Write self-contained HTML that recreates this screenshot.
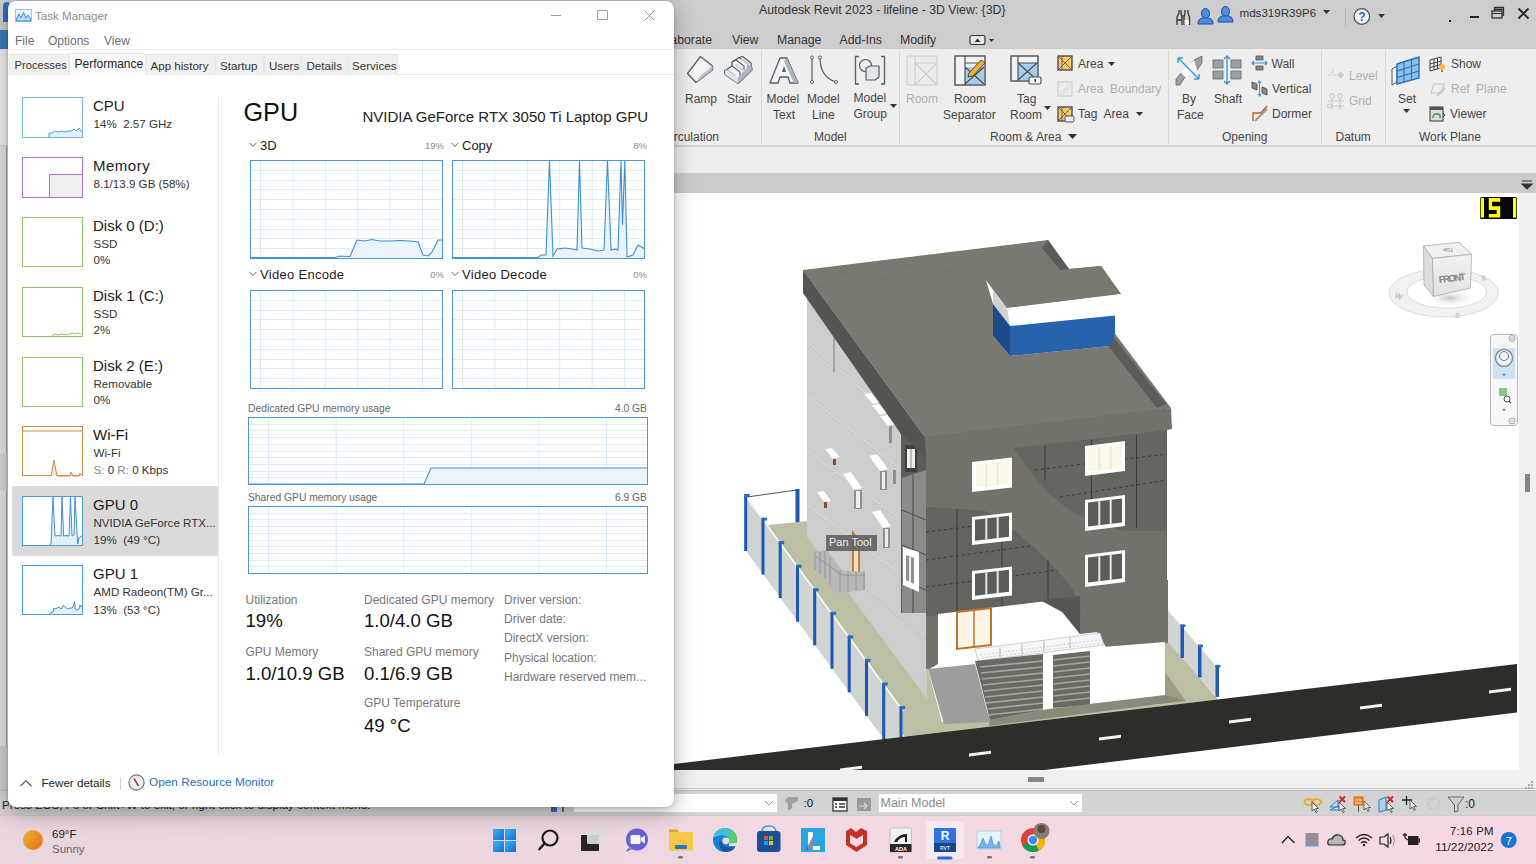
<!DOCTYPE html>
<html><head><meta charset="utf-8">
<style>
*{margin:0;padding:0;box-sizing:border-box}
html,body{width:1536px;height:864px;overflow:hidden;background:#fff;font-family:"Liberation Sans",sans-serif;position:relative}
.a{position:absolute}
.t{position:absolute;line-height:1;white-space:nowrap}
svg{position:absolute;overflow:visible}
</style></head><body>

<!-- ===== REVIT BACKGROUND ===== -->
<div class="a" style="left:0;top:0;width:1536px;height:49px;background:#cdcdcd"></div>
<div class="a" style="left:0;top:49px;width:1536px;height:97px;background:#eeeeee"></div>
<div class="a" style="left:0;top:146px;width:1536px;height:1px;background:#d6d6d6"></div>
<div class="a" style="left:0;top:147px;width:1536px;height:26px;background:#eeeeee"></div>
<div class="a" style="left:0;top:173px;width:1536px;height:21px;background:#cbcbcb"></div>
<!-- view area -->
<div class="a" id="view" style="left:0;top:193px;width:1519px;height:577px;background:#fff"></div>
<div class="a" style="left:1519px;top:193px;width:17px;height:597px;background:#f0f0f0"></div>
<div class="a" style="left:1525px;top:474px;width:5px;height:18px;background:#858585"></div>
<div class="a" style="left:0;top:770px;width:1519px;height:20px;background:#f0f0f0"></div>
<div class="a" style="left:1028px;top:777px;width:16px;height:5px;background:#858585"></div>
<!-- status bar -->
<div class="a" style="left:0;top:790px;width:1536px;height:26px;background:#d3d3d3"></div>
<div class="a" style="left:0;top:790px;width:1536px;height:1px;background:#bdbdbd"></div>


<!-- ===== REVIT CHROME ===== -->
<div class="t" style="left:759px;top:3.5px;font-size:12.3px;color:#333">Autodesk Revit 2023 - lifeline - 3D View: {3D}</div>
<div class="t" style="right:824px;top:33.5px;font-size:12.3px;color:#333">Collaborate</div>
<div class="t" style="left:732px;top:33.5px;font-size:12.3px;color:#333">View</div>
<div class="t" style="left:777px;top:33.5px;font-size:12.3px;color:#333">Manage</div>
<div class="t" style="left:839.5px;top:33.5px;font-size:12.3px;color:#333">Add-Ins</div>
<div class="t" style="left:900px;top:33.5px;font-size:12.3px;color:#333">Modify</div>
<svg style="left:969px;top:34px" width="28" height="12" viewBox="0 0 28 12"><rect x="1" y="1.5" width="15" height="9" rx="2" fill="#e8e8e8" stroke="#333" stroke-width="1.2"/><path d="M5.5 8 L8.5 4.5 L11.5 8Z" fill="#333"/><path d="M20 5 L25 5 L22.5 8Z" fill="#333"/></svg>
<!-- right title icons -->
<svg style="left:1176px;top:9px" width="15" height="17" viewBox="0 0 15 17"><path d="M1 16 L1 8 L3 4 L3 1 M6 16 L6 8 L5 4 L5 1 M1 11 L6 11" fill="none" stroke="#333" stroke-width="1.3"/><path d="M8 16 L8 8 L9 4 L9 1 M13.5 16 L13.5 8 L12 4 L12 1" fill="none" stroke="#333" stroke-width="1.3"/><rect x="8.6" y="11" width="4.3" height="4.5" fill="#f4f4f4"/><path d="M6 7 L8 7" stroke="#333" stroke-width="1.2"/></svg>
<svg style="left:1197px;top:7px" width="17" height="18" viewBox="0 0 17 18"><ellipse cx="8.5" cy="6.5" rx="4" ry="5" fill="#4d8de0" stroke="#1d4f9a" stroke-width="1"/><path d="M1 17 Q1 10 8.5 11 Q16 10 16 17Z" fill="#4d8de0" stroke="#1d4f9a" stroke-width="1"/></svg>
<svg style="left:1217px;top:5px" width="17" height="18" viewBox="0 0 17 18"><ellipse cx="8.5" cy="6.5" rx="4" ry="5" fill="#4d8de0" stroke="#1d4f9a" stroke-width="1"/><path d="M1 17 Q1 10 8.5 11 Q16 10 16 17Z" fill="#4d8de0" stroke="#1d4f9a" stroke-width="1"/></svg>
<div class="t" style="left:1239.5px;top:7px;font-size:11.6px;color:#333">mds319R39P6</div>
<svg style="left:1323px;top:10px" width="7" height="5" viewBox="0 0 7 5"><path d="M0 0 L7 0 L3.5 4Z" fill="#333"/></svg>
<div class="a" style="left:1345px;top:8px;width:1px;height:18px;background:#b8b8b8"></div>
<svg style="left:1353px;top:8px" width="19" height="18" viewBox="0 0 19 18"><circle cx="8.8" cy="8.5" r="7.8" fill="#eef2f8" stroke="#555" stroke-width="1.3"/><text x="8.8" y="13" font-family="Liberation Sans" font-weight="bold" font-size="12" text-anchor="middle" fill="#2a62c0">?</text></svg>
<svg style="left:1378px;top:14px" width="7" height="5" viewBox="0 0 7 5"><path d="M0 0 L7 0 L3.5 4Z" fill="#333"/></svg>
<div class="a" style="left:1449px;top:20px;width:2px;height:2px;background:#222"></div>
<div class="a" style="left:1470px;top:16px;width:9px;height:2px;background:#222"></div>
<svg style="left:1491px;top:6px" width="14" height="13" viewBox="0 0 14 13"><rect x="1" y="5" width="10" height="7" fill="none" stroke="#333" stroke-width="1.3"/><path d="M1 7.5 L11 7.5" stroke="#333" stroke-width="1"/><path d="M3.5 5 L3.5 1.5 L12.5 1.5 L12.5 9 L11 9 M3.5 3.5 L12.5 3.5" fill="none" stroke="#333" stroke-width="1.3"/></svg>
<svg style="left:1517px;top:7px" width="13" height="13" viewBox="0 0 13 13"><path d="M1.5 1.5 L11.5 11.5 M11.5 1.5 L1.5 11.5" stroke="#222" stroke-width="1.8"/></svg>

<!-- ribbon separators -->
<div class="a" style="left:761px;top:50px;width:1px;height:95px;background:#d8d8d8"></div>
<div class="a" style="left:899px;top:50px;width:1px;height:95px;background:#d8d8d8"></div>
<div class="a" style="left:1168px;top:50px;width:1px;height:95px;background:#d8d8d8"></div>
<div class="a" style="left:1321px;top:50px;width:1px;height:95px;background:#d8d8d8"></div>
<div class="a" style="left:1385px;top:50px;width:1px;height:95px;background:#d8d8d8"></div>
<div class="a" style="left:0;top:145px;width:1536px;height:1px;background:#d4d4d4"></div>

<!-- ribbon labels -->
<div class="t" style="left:685px;top:92.5px;font-size:12px;color:#454545">Ramp</div>
<div class="t" style="left:727px;top:92.5px;font-size:12px;color:#454545">Stair</div>
<div class="t" style="left:766.5px;top:92.5px;font-size:12px;color:#454545">Model</div>
<div class="t" style="left:773px;top:108.5px;font-size:12px;color:#454545">Text</div>
<div class="t" style="left:807px;top:92.5px;font-size:12px;color:#454545">Model</div>
<div class="t" style="left:812px;top:108.5px;font-size:12px;color:#454545">Line</div>
<div class="t" style="left:853.5px;top:92px;font-size:12px;color:#454545">Model</div>
<div class="t" style="left:853.5px;top:108px;font-size:12px;color:#454545">Group</div>
<svg style="left:890px;top:104px" width="7" height="4" viewBox="0 0 7 4"><path d="M0 0 L7 0 L3.5 4Z" fill="#333"/></svg>
<div class="t" style="right:817px;top:130.5px;font-size:12px;color:#454545">Circulation</div>
<div class="t" style="left:814px;top:130.5px;font-size:12px;color:#454545">Model</div>
<div class="t" style="left:906px;top:92.5px;font-size:12px;color:#b0b0b0">Room</div>
<div class="t" style="left:954px;top:92.5px;font-size:12px;color:#454545">Room</div>
<div class="t" style="left:943px;top:108.5px;font-size:12px;color:#454545">Separator</div>
<div class="t" style="left:1017px;top:93px;font-size:12px;color:#454545">Tag</div>
<div class="t" style="left:1010px;top:109px;font-size:12px;color:#454545">Room</div>
<svg style="left:1044px;top:106px" width="7" height="4" viewBox="0 0 7 4"><path d="M0 0 L7 0 L3.5 4Z" fill="#333"/></svg>
<div class="t" style="left:1078px;top:57.5px;font-size:12px;color:#454545">Area</div>
<svg style="left:1108px;top:62px" width="7" height="4" viewBox="0 0 7 4"><path d="M0 0 L7 0 L3.5 4Z" fill="#333"/></svg>
<div class="t" style="left:1078px;top:82.5px;font-size:12px;color:#b0b0b0">Area</div><div class="t" style="left:1110px;top:82.5px;font-size:12px;color:#b0b0b0">Boundary</div>
<div class="t" style="left:1078px;top:107.5px;font-size:12px;color:#454545">Tag</div><div class="t" style="left:1103.5px;top:107.5px;font-size:12px;color:#454545">Area</div>
<svg style="left:1136px;top:112px" width="7" height="4" viewBox="0 0 7 4"><path d="M0 0 L7 0 L3.5 4Z" fill="#333"/></svg>
<div class="t" style="left:990px;top:130.5px;font-size:12px;color:#454545">Room &amp; Area</div>
<svg style="left:1068px;top:134px" width="9" height="5" viewBox="0 0 9 5"><path d="M0 0 L9 0 L4.5 5Z" fill="#333"/></svg>
<div class="t" style="left:1182px;top:92.5px;font-size:12px;color:#454545">By</div>
<div class="t" style="left:1177px;top:108.5px;font-size:12px;color:#454545">Face</div>
<div class="t" style="left:1214px;top:92.5px;font-size:12px;color:#454545">Shaft</div>
<div class="t" style="left:1271.5px;top:57.5px;font-size:12px;color:#454545">Wall</div>
<div class="t" style="left:1272px;top:82.5px;font-size:12px;color:#454545">Vertical</div>
<div class="t" style="left:1272px;top:107.5px;font-size:12px;color:#454545">Dormer</div>
<div class="t" style="left:1222px;top:130.5px;font-size:12px;color:#454545">Opening</div>
<div class="t" style="left:1349px;top:70px;font-size:12px;color:#b0b0b0">Level</div>
<div class="t" style="left:1349px;top:95px;font-size:12px;color:#b0b0b0">Grid</div>
<div class="t" style="left:1335.5px;top:130.5px;font-size:12px;color:#454545">Datum</div>
<div class="t" style="left:1398px;top:92.5px;font-size:12px;color:#454545">Set</div>
<svg style="left:1403px;top:109px" width="7" height="4" viewBox="0 0 7 4"><path d="M0 0 L7 0 L3.5 4Z" fill="#333"/></svg>
<div class="t" style="left:1451px;top:57.5px;font-size:12px;color:#454545">Show</div>
<div class="t" style="left:1451px;top:82.5px;font-size:12px;color:#b0b0b0">Ref</div><div class="t" style="left:1476px;top:82.5px;font-size:12px;color:#b0b0b0">Plane</div>
<div class="t" style="left:1450px;top:107.5px;font-size:12px;color:#454545">Viewer</div>
<div class="t" style="left:1419px;top:130.5px;font-size:12px;color:#454545">Work Plane</div>
<svg style="left:1522px;top:181px" width="10" height="8" viewBox="0 0 10 8"><path d="M0 0 L10 0 M0 3 L10 3 L5 8Z" fill="#333" stroke="#333" stroke-width="1.2"/></svg>

<!-- Ramp -->
<svg style="left:686px;top:55px" width="30" height="30" viewBox="0 0 30 30"><path d="M1.5 18.5 L14.5 1.5 L26.5 11 L26.5 15 L10 27.5 Z" fill="#f4f4f4" stroke="#5a6270" stroke-width="1.4" stroke-linejoin="round"/><path d="M10 27.5 L26.5 15 L26.5 11 L14 21Z" fill="#b8c0cc"/></svg>
<!-- Stair -->
<svg style="left:723px;top:55px" width="32" height="31" viewBox="0 0 32 31"><path d="M1.5 16 L9 11 L9 7 L16 2.5 L19.5 1.5 L28 8 L29 15 L15 28.5 L2 19.5 Z" fill="#f3f4f6" stroke="#555c66" stroke-width="1.3" stroke-linejoin="round"/><path d="M9 11 L17 17 L17 21 M9 7 L13 5 L21 11 L21 15 M16 2.5 L25 9 L25 13" fill="none" stroke="#555c66" stroke-width="1.1"/><path d="M4.5 15 L12.5 21 M12.5 9.5 L20.5 15.5 M18 4 L26 10" stroke="#c9ced6" stroke-width="2"/><path d="M15 28.5 L29 15 L28 9 L15 22Z" fill="#aeb6c2"/><path d="M2 19.5 L15 28.5 L15 23 L2 15Z" fill="#dfe3e8"/></svg>
<!-- Model Text -->
<svg style="left:769px;top:56px" width="31" height="29" viewBox="0 0 31 29"><path d="M1 27 L11 2 L18 2 L29 27 L21 27 L19 21 L11 21 L9 27Z" fill="#f3f4f6" stroke="#555c66" stroke-width="1.3" stroke-linejoin="round"/><path d="M13 16 L15 10 L17 16Z" fill="#555c66"/><path d="M18 2 L29 27 L25 27 L15 5Z" fill="#aab2be"/></svg>
<!-- Model Line -->
<svg style="left:809px;top:55px" width="30" height="30" viewBox="0 0 30 30"><line x1="3" y1="2" x2="3" y2="27" stroke="#555c66" stroke-width="1.2"/><circle cx="3" cy="2.5" r="1.5" fill="#fff" stroke="#555c66"/><circle cx="3" cy="27" r="1.5" fill="#fff" stroke="#555c66"/><path d="M11 2.5 Q11 22 27 27" fill="none" stroke="#555c66" stroke-width="1.2"/><circle cx="11" cy="2.5" r="1.5" fill="#fff" stroke="#555c66"/><circle cx="27" cy="27" r="1.5" fill="#fff" stroke="#555c66"/></svg>
<!-- Model Group -->
<svg style="left:854px;top:55px" width="32" height="31" viewBox="0 0 32 31"><path d="M5 1.5 L1.5 1.5 L1.5 29 L5 29 M27 1.5 L30.5 1.5 L30.5 29 L27 29" fill="none" stroke="#555c66" stroke-width="1.3"/><circle cx="11.5" cy="10.5" r="6" fill="#eef0f3" stroke="#555c66" stroke-width="1.2"/><path d="M12 13 L16 11 L25 11 L25 22 L21 25 L12 25Z" fill="#e3e6ea" stroke="#555c66" stroke-width="1.2" stroke-linejoin="round"/></svg>
<!-- Room gray -->
<svg style="left:906px;top:55px" width="32" height="31" viewBox="0 0 32 31"><rect x="1" y="1" width="30" height="29" fill="#ececec" stroke="#d2d2d2" stroke-width="1.2"/><path d="M9 1 L9 30 M9 8 L31 8 M9 8 L31 30 M31 8 L9 30" stroke="#cfcfcf" stroke-width="1.2" fill="none"/></svg>
<!-- Room Separator -->
<svg style="left:954px;top:55px" width="32" height="31" viewBox="0 0 32 31"><rect x="1" y="1" width="30" height="29" fill="#f2f3f5" stroke="#4a4f57" stroke-width="1.4"/><rect x="11" y="12" width="19" height="17" fill="#a8cdea"/><path d="M11 1 L11 30 M11 8 L31 8 M11 12 L30 29 M30 12 L11 29" stroke="#4a4f57" stroke-width="1.2" fill="none"/><path d="M15 18 L27 5 L31 8 L19 21 L14 22Z" fill="#f0b030" stroke="#5a4a2a" stroke-width="1"/></svg>
<!-- Tag Room -->
<svg style="left:1010px;top:55px" width="32" height="31" viewBox="0 0 32 31"><rect x="1" y="1" width="27" height="25" fill="#f2f3f5" stroke="#4a4f57" stroke-width="1.4"/><rect x="8" y="8" width="19" height="17" fill="#a8cdea"/><path d="M8 1 L8 26 M8 8 L28 8 M8 8 L27 25 M27 8 L8 25" stroke="#4a4f57" stroke-width="1.2" fill="none"/><rect x="19" y="22" width="12" height="7" rx="1.5" fill="#fff" stroke="#4a4f57" stroke-width="1.2"/><rect x="24.5" y="24" width="1.5" height="3" fill="#333"/></svg>
<!-- Area small -->
<svg style="left:1057px;top:55px" width="16" height="16" viewBox="0 0 16 16"><rect x="1" y="1" width="14" height="14" fill="#f5c96a" stroke="#4a4f57" stroke-width="1.4"/><path d="M1 1 L15 15 M15 1 L1 15 M5 1 L5 15" stroke="#6a5a3a" stroke-width="0.9"/></svg>
<svg style="left:1057px;top:81px" width="16" height="16" viewBox="0 0 16 16"><rect x="1" y="1" width="14" height="14" fill="#ececec" stroke="#cfcfcf" stroke-width="1.2"/><path d="M3 13 L13 3 M6 13 L13 6" stroke="#cfcfcf" stroke-width="1"/></svg>
<svg style="left:1057px;top:106px" width="18" height="17" viewBox="0 0 18 17"><rect x="1" y="1" width="14" height="14" fill="#f5c96a" stroke="#4a4f57" stroke-width="1.4"/><path d="M1 1 L15 15 M15 1 L1 15 M5 1 L5 15" stroke="#6a5a3a" stroke-width="0.9"/><rect x="8" y="10" width="9" height="6" rx="1.5" fill="#e8eef6" stroke="#4a4f57" stroke-width="1"/></svg>
<!-- By Face -->
<svg style="left:1175px;top:55px" width="30" height="31" viewBox="0 0 30 31"><path d="M1 24 L6 18 L10 22 L5 30 L1 30Z M14 11 L19 5 L27 1 L27 8 L22 15Z" fill="#9aa0a8" stroke="#666" stroke-width="0.8"/><path d="M6 18 L19 5 L22 15 L10 22Z" fill="#fff"/><path d="M3 3 L24 24 M3 3 L3 8 M3 3 L8 3 M24 24 L19 24 M24 24 L24 19" stroke="#3a98e0" stroke-width="1.4" fill="none"/></svg>
<!-- Shaft -->
<svg style="left:1212px;top:55px" width="30" height="31" viewBox="0 0 30 31"><rect x="1" y="5" width="10" height="8" fill="#9aa0a8" stroke="#666" stroke-width="0.8"/><rect x="19" y="5" width="10" height="8" fill="#9aa0a8" stroke="#666" stroke-width="0.8"/><rect x="1" y="16" width="10" height="8" fill="#9aa0a8" stroke="#666" stroke-width="0.8"/><rect x="19" y="16" width="10" height="8" fill="#9aa0a8" stroke="#666" stroke-width="0.8"/><path d="M15 1 L15 29 M12 4 L15 1 L18 4 M12 26 L15 29 L18 26" stroke="#3a98e0" stroke-width="1.4" fill="none"/></svg>
<!-- Wall/Vertical/Dormer -->
<svg style="left:1251px;top:55px" width="17" height="17" viewBox="0 0 17 17"><rect x="5" y="1" width="7" height="4" fill="#888" stroke="#555" stroke-width="0.8"/><rect x="5" y="11" width="7" height="4" fill="#888" stroke="#555" stroke-width="0.8"/><path d="M1 8 L16 8 M3 6 L1 8 L3 10 M14 6 L16 8 L14 10" stroke="#3a98e0" stroke-width="1.2" fill="none"/></svg>
<svg style="left:1251px;top:80px" width="17" height="17" viewBox="0 0 17 17"><path d="M1 2 L6 4 L6 10 L1 8Z M11 7 L16 9 L16 15 L11 13Z" fill="#888" stroke="#444" stroke-width="0.8"/><path d="M8.5 1 L8.5 16 M7 3 L8.5 1 L10 3 M7 14 L8.5 16 L10 14" stroke="#3a98e0" stroke-width="1.1" fill="none"/></svg>
<svg style="left:1251px;top:105px" width="17" height="17" viewBox="0 0 17 17"><path d="M2 16 L2 8 L10 8 L16 1" stroke="#c85a2a" stroke-width="1.4" fill="none"/><path d="M4 16 L16 4" stroke="#999" stroke-width="2"/></svg>
<!-- Level Grid gray -->
<svg style="left:1327px;top:68px" width="18" height="14" viewBox="0 0 18 14"><path d="M1 7 L10 7" stroke="#c8c8c8" stroke-width="1" stroke-dasharray="2 1"/><path d="M10 7 L13.5 3.5 L17 7 L13.5 10.5Z" fill="#c8c8c8"/><text x="4" y="5" font-size="6" fill="#c8c8c8" font-family="Liberation Sans">1</text></svg>
<svg style="left:1327px;top:93px" width="18" height="17" viewBox="0 0 18 17"><path d="M5 4 L5 16 M13 4 L13 16 M1 8 L17 8 M1 13 L17 13" stroke="#c8c8c8" stroke-width="1.1"/><circle cx="5" cy="3" r="2.3" fill="#eee" stroke="#c8c8c8"/><circle cx="13" cy="3" r="2.3" fill="#eee" stroke="#c8c8c8"/><circle cx="2.5" cy="13" r="2" fill="#eee" stroke="#c8c8c8"/></svg>
<!-- Set -->
<svg style="left:1391px;top:56px" width="30" height="30" viewBox="0 0 30 30"><path d="M1 13 L6 10 L6 26 L1 29Z" fill="#f3f3f3" stroke="#555" stroke-width="1"/><path d="M6 8 L28 1 L28 22 L6 28Z" fill="#8fc0ea" stroke="#2a6fb8" stroke-width="1.4"/><path d="M13 6 L13 26 M20.5 4 L20.5 24 M6 15 L28 8 M6 21.5 L28 15" stroke="#2a6fb8" stroke-width="1.1"/></svg>
<!-- Show / RefPlane / Viewer -->
<svg style="left:1429px;top:56px" width="17" height="17" viewBox="0 0 17 17"><path d="M1 4 L12 1 L12 12 L1 15Z M1 8 L12 5 M1 11.5 L12 8.5 M5 3 L5 14 M8.5 2 L8.5 13" fill="none" stroke="#444" stroke-width="1"/><circle cx="13" cy="11" r="3" fill="#f7c23a"/><rect x="12" y="14" width="2" height="2" fill="#888"/></svg>
<svg style="left:1429px;top:81px" width="17" height="17" viewBox="0 0 17 17"><path d="M2 12 L5 3 L15 3 L12 12Z" fill="none" stroke="#c8c8c8" stroke-width="1.1"/><path d="M8 15 L16 7" stroke="#c8c8c8" stroke-width="2"/></svg>
<svg style="left:1429px;top:106px" width="17" height="16" viewBox="0 0 17 16"><rect x="1" y="1" width="13" height="14" fill="#ddd" stroke="#444" stroke-width="1.1"/><rect x="1" y="1" width="13" height="3" fill="#555"/><path d="M4 12 Q4 7 9 8 Q12 9 11 12" fill="none" stroke="#3aa040" stroke-width="1.6"/><path d="M14 7 L16 9 L14 11" stroke="#444" stroke-width="1" fill="none"/></svg>



<!-- ===== 3D VIEW ===== -->
<svg style="left:0;top:0" width="1536" height="864" viewBox="0 0 1536 864">
<defs><clipPath id="vc"><rect x="0" y="194" width="1519" height="576"/></clipPath></defs>
<g clip-path="url(#vc)">
<!-- back fence -->
<line x1="747" y1="497" x2="797" y2="490" stroke="#555" stroke-width="1"/>
<rect x="795.5" y="489" width="4" height="36" fill="#1e5bb5"/>
<!-- paving -->
<polygon points="768,525 808,521 1165,600 1168,640 1218,699.4 905,736.6 890,720" fill="#bdbfa5"/>
<polygon points="1165,672 1186,701 1160,704" fill="#9d9d86"/>
<polygon points="1166,608 1218,668 1218,698 1166,640" fill="#d0d4d3"/><line x1="1166" y1="608" x2="1218" y2="668" stroke="#f2f2f2" stroke-width="1"/><rect x="1180.5" y="624.5" width="3.5" height="33.4" fill="#1e5bb5"/><rect x="1180.5" y="624.5" width="5" height="2.5" fill="#2a6ac4"/><rect x="1198.0" y="644.7" width="3.5" height="32.7" fill="#1e5bb5"/><rect x="1198.0" y="644.7" width="5" height="2.5" fill="#2a6ac4"/><rect x="1215.5" y="664.9" width="3.5" height="32.0" fill="#1e5bb5"/><rect x="1215.5" y="664.9" width="5" height="2.5" fill="#2a6ac4"/>
<!-- left wall -->
<polygon points="807,293 901,434 926,460 927,699 807,537" fill="#cbcecd"/>
<g stroke="#f6f6f6" stroke-width="0.9" stroke-dasharray="2 2" fill="none">
<path d="M807 342 L901 425"/><path d="M807 396 L901 470"/><path d="M807 451 L901 520"/><path d="M807 505 L901 575"/>
</g>
<g stroke="#9a9d9c" stroke-width="0.6" stroke-dasharray="1.5 2.5" fill="none">
<path d="M807 343 L901 426"/><path d="M807 397 L901 471"/><path d="M807 452 L901 521"/><path d="M807 506 L901 576"/><path d="M830 560 L926 640"/>
</g>
<line x1="834" y1="338" x2="834" y2="372" stroke="#8a8d8c" stroke-width="1.2"/>
<g fill="#ffffff">
<polygon points="864,394 871,393 880,402 873,404"/><polygon points="872,405 879,404 887,413 880,415"/><polygon points="880,416 887,415 895,424 888,426"/>
<polygon points="825,449 832,448 840,457 833,459"/><polygon points="843,474 851,472 862,488 854,490"/><polygon points="869,456 877,454 888,469 880,471"/>
<polygon points="817,492 824,491 831,501 824,502"/><polygon points="872,512 880,510 891,526 883,528"/>
</g>
<g fill="#8d908f"><rect x="889" y="426" width="3" height="17"/><rect x="854" y="490" width="8" height="19"/><rect x="880" y="471" width="7" height="19"/><rect x="883" y="528" width="7" height="20"/><rect x="893" y="470" width="3" height="14"/></g>
<g fill="#eee"><rect x="856" y="491" width="4" height="17"/><rect x="882" y="472" width="3" height="17"/><rect x="885" y="529" width="3" height="18"/></g>
<rect x="833" y="459" width="3" height="6" fill="#8a4a2a"/><rect x="824" y="502" width="3" height="6" fill="#8a4a2a"/>
<!-- door + small stair -->
<polygon points="852,530 860,540 860,582 852,574" fill="#c97a3f"/><polygon points="854,536 858,541 858,578 854,573" fill="#f1e0c8"/>
<polygon points="815,552 827,550 842,571 865,572 865,590 835,594 813,568" fill="#b8b9b8"/>
<g stroke="#8a8b8a" stroke-width="0.8"><path fill="none" d="M815 552 L815 570 M820 552 L820 574 M825 551 L825 578 M830 558 L830 585 M840 570 L840 592 M848 571 L848 592 M856 571 L856 591 M864 571 L864 590 M815 556 L842 575 L865 575"/></g>
<!-- corner glass column -->
<polygon points="869,380 901,430 926,437 926,613 901,613 901,434" fill="#5c5d59"/>
<polygon points="902,478 926,470 926,613 902,613" fill="#8a8c8a"/>
<g stroke="#3a3b38" stroke-width="0.8"><path d="M913 475 L913 613 M902 510 L926 520 M902 545 L926 555 M902 580 L926 590"/></g>
<rect x="905" y="445" width="12" height="27" fill="#3f403d"/><rect x="907" y="449" width="8" height="19" fill="#f0f0ea"/><rect x="910.5" y="449" width="1" height="19" fill="#888"/>
<polygon points="903,547 919,552 919,592 903,585" fill="#ffffff"/><polygon points="906,555 914,558 914,584 906,580" fill="#8f918f"/><rect x="909" y="557" width="2" height="25" fill="#eee"/>
<!-- front facade -->
<polygon points="926,428 1167,404 1167,643 926,669" fill="#72716a"/>
<!-- dark glass areas -->
<path d="M1013 448 L1167 430 L1167 531 L1129 531 Q1105 527 1087 520 Q1062 507 1046 490 Q1028 470 1013 448 Z" fill="#66655f"/>
<path d="M926 507 L959 509 L985 511 Q1005 522 1022 537 Q1048 559 1070 585 Q1078 598 1081 612 L926 616 Z" fill="#64635d"/>
<g stroke="#3a3a36" stroke-width="1" fill="none">
<path d="M1045 446 L1045 480 M1091.5 440 L1091.5 514 M1136.5 435 L1136.5 528"/>
<path d="M1035 470 L1167 454 M1060 497 L1167 480" stroke-dasharray="3 3"/>
<path d="M957 509 L957 614 M1002 518 L1002 612 M1048 560 L1048 608"/>
<path d="M926 532 L1005 522 M926 560 L1030 546 M926 587 L1058 570" stroke-dasharray="3 3"/>
</g>
<!-- windows -->
<polygon points="972,462 1012,457.5 1012,487.5 972,492" fill="#ffffff"/><polygon points="975,464.64 1009,460.86 1009,483.86 975,487.64" fill="#fbf9e6"/><rect x="985.3" y="463.4" width="2" height="23" fill="#e8e8e0"/><rect x="996.7" y="462.1" width="2" height="23" fill="#e8e8e0"/><polygon points="972,517 1012,512.5 1012,540.5 972,545" fill="#ffffff"/><polygon points="975,519.64 1009,515.86 1009,536.86 975,540.64" fill="#5d5c57"/><rect x="985.3" y="518.4" width="2" height="21" fill="#e8e8e0"/><rect x="996.7" y="517.1" width="2" height="21" fill="#e8e8e0"/><polygon points="972,571 1012,566.5 1012,595.5 972,600" fill="#ffffff"/><polygon points="975,573.64 1009,569.86 1009,591.86 975,595.64" fill="#5d5c57"/><rect x="985.3" y="572.4" width="2" height="22" fill="#e8e8e0"/><rect x="996.7" y="571.1" width="2" height="22" fill="#e8e8e0"/><polygon points="1085,446 1125,441 1125,471 1085,476" fill="#ffffff"/><polygon points="1088,448.6 1122,444.4 1122,467.4 1088,471.6" fill="#fbf9e6"/><rect x="1098.3" y="447.2" width="2" height="23" fill="#e8e8e0"/><rect x="1109.7" y="445.8" width="2" height="23" fill="#e8e8e0"/><polygon points="1085,500 1125,495 1125,526 1085,531" fill="#ffffff"/><polygon points="1088,502.6 1122,498.4 1122,522.4 1088,526.6" fill="#5d5c57"/><rect x="1098.3" y="501.2" width="2" height="24" fill="#e8e8e0"/><rect x="1109.7" y="499.8" width="2" height="24" fill="#e8e8e0"/><polygon points="1085,555 1125,550 1125,582 1085,587" fill="#ffffff"/><polygon points="1088,557.6 1122,553.4 1122,578.4 1088,582.6" fill="#5d5c57"/><rect x="1098.3" y="556.2" width="2" height="25" fill="#e8e8e0"/><rect x="1109.7" y="554.8" width="2" height="25" fill="#e8e8e0"/>
<!-- ground floor -->
<polygon points="938,614 1055,600 1080,634 1107,631 1165,643 1165,696 1090,704 1053,708 942,722 928,670 938,664" fill="#ffffff"/>
<polygon points="1080,590 1168,580 1168,643 1107,649 1090,620" fill="#72716a"/>
<polygon points="1040,600 1080,596 1080,634 1062,612" fill="#565652"/>
<polygon points="957,612 991,608 991,645 957,649" fill="#fbf6e4" stroke="#c4702f" stroke-width="2"/>
<line x1="974" y1="610" x2="974" y2="647" stroke="#c4702f" stroke-width="1.5"/>
<polygon points="975,649 1100,633 1104,645 978,661" fill="#f6f6f6" stroke="#b5b5b5" stroke-width="0.6"/><path d="M980 655 L1100 640 M982 658 L1102 643" stroke="#c4c4c4" stroke-width="0.8" stroke-dasharray="2 2"/><path d="M1000 647 L1000 658 M1022 644 L1022 655 M1044 641 L1044 652 M1070 637 L1070 648" stroke="#aaa" stroke-width="0.8"/>
<polygon points="928,669 975,664 990,722 944,724" fill="#9d9d9b"/>
<polygon points="975,661 1043,654 1043,710 990,720" fill="#6a6a65"/>
<polygon points="1053,655 1090,651 1090,705 1053,708" fill="#6a6a65"/>
<g stroke="#a8a79e" stroke-width="1.6">
<path d="M980 667 L1043 661 M981 673 L1043 667 M982 679 L1043 673 M983 685 L1043 679 M984 691 L1043 685 M985 697 L1043 691 M986 703 L1043 697 M987 709 L1043 703 M988 715 L1043 709"/>
<path d="M1053 660 L1090 656 M1053 666 L1090 662 M1053 672 L1090 668 M1053 678 L1090 674 M1053 684 L1090 680 M1053 690 L1090 686 M1053 696 L1090 692 M1053 702 L1090 698"/>
</g>
<polygon points="1043,655 1053,654 1053,708 1043,710" fill="#fff"/>
<polygon points="1090,648 1165,642 1165,695 1090,703" fill="#ffffff"/>
<polygon points="990,720 1043,710 1090,704 1165,695 1186,700.6 989,726" fill="#8a8a7c"/>
<!-- roof -->
<polygon points="803,270 1048,240 1069,269 1101,266 1121,294 1007,308 986,280 993,304 993,336 1010,356 1110,346 1113,331 1171,408 925,437" fill="#7a7971"/>
<polygon points="810,281 1040,252 1046,254 815,284" fill="#7c7b73"/>
<polygon points="1048,240 1069,269 1060,270 1042,248" fill="#5b5c57"/>
<polygon points="1111,334 1166,404 1157,408 1109,347" fill="#5b5c57"/>
<polygon points="803,270 925,437 926,458 901,434 803,293" fill="#545551"/>
<polygon points="925,437 1171,408 1172,429 1167,430 926,458" fill="#72716a"/>
<!-- stair block -->
<polygon points="1069,269 1101,266 1121,294 1007,308 986,280 990,282" fill="#7a7971"/>
<polygon points="985.5,280 993,291 993,304 1010,326 1010,309 1006.5,308" fill="#d0d3d2"/>
<polygon points="1007,308 1121,294 1115,316 1010,326" fill="#ffffff"/>
<polygon points="993,304 1010,326 1010,356 993,336" fill="#1f4a8a"/>
<polygon points="1010,326 1115,315.5 1115,334 1110.5,346 1010,356" fill="#2663ab"/>
<!-- fence left (front of paving) -->
<polygon points="746,496.0 903,710.5 903,765.5 746,551.0" fill="#d0d4d3"/><line x1="746" y1="496.5" x2="903" y2="711.0" stroke="#fafafa" stroke-width="1.6"/><rect x="744.2" y="494.5" width="3" height="56.5" fill="#1d57b2"/><rect x="744.2" y="494.0" width="5.5" height="3" fill="#2a6ac4"/><rect x="761.5" y="518.1" width="3" height="56.5" fill="#1d57b2"/><rect x="761.5" y="517.6" width="5.5" height="3" fill="#2a6ac4"/><rect x="778.7" y="541.6" width="3" height="56.5" fill="#1d57b2"/><rect x="778.7" y="541.1" width="5.5" height="3" fill="#2a6ac4"/><rect x="796.0" y="565.2" width="3" height="56.5" fill="#1d57b2"/><rect x="796.0" y="564.7" width="5.5" height="3" fill="#2a6ac4"/><rect x="813.2" y="588.8" width="3" height="56.5" fill="#1d57b2"/><rect x="813.2" y="588.3" width="5.5" height="3" fill="#2a6ac4"/><rect x="830.5" y="612.3" width="3" height="56.5" fill="#1d57b2"/><rect x="830.5" y="611.8" width="5.5" height="3" fill="#2a6ac4"/><rect x="847.7" y="635.9" width="3" height="56.5" fill="#1d57b2"/><rect x="847.7" y="635.4" width="5.5" height="3" fill="#2a6ac4"/><rect x="865.0" y="659.4" width="3" height="56.5" fill="#1d57b2"/><rect x="865.0" y="658.9" width="5.5" height="3" fill="#2a6ac4"/><rect x="882.2" y="683.0" width="3" height="56.5" fill="#1d57b2"/><rect x="882.2" y="682.5" width="5.5" height="3" fill="#2a6ac4"/><rect x="899.5" y="706.6" width="3" height="56.5" fill="#1d57b2"/><rect x="899.5" y="706.1" width="5.5" height="3" fill="#2a6ac4"/>
<!-- road -->
<polygon points="674,764 1517,664 1517,712.6 674,815" fill="#2d2d29"/>
<g fill="#f4f4f4"><polygon points="840,768.5 862,765.7 862,768.7 840,771.5"/><polygon points="969,753.5 991,750.7 991,753.7 969,756.5"/><polygon points="1099,737.5 1121,734.7 1121,737.7 1099,740.5"/><polygon points="1229,720.5 1251,717.7 1251,720.7 1229,723.5"/><polygon points="1360,706.5 1382,703.7 1382,706.7 1360,709.5"/><polygon points="1489,690.5 1511,687.7 1511,690.7 1489,693.5"/></g>
</g>
</svg>
<!-- tooltip -->
<div class="a" style="left:826px;top:535px;width:51px;height:16px;background:rgba(90,90,90,0.85)"></div>
<div class="t" style="left:829px;top:537px;font-size:11px;color:#f0f0f0">Pan Tool</div>


<!-- view cube -->
<svg style="left:1385px;top:235px" width="120" height="90" viewBox="1385 235 120 90">
<defs><radialGradient id="sh" cx="0.5" cy="0.5" r="0.5"><stop offset="0" stop-color="#c4c4c4"/><stop offset="1" stop-color="#fff" stop-opacity="0"/></radialGradient>
<linearGradient id="ff" x1="0" y1="0" x2="0" y2="1"><stop offset="0" stop-color="#f2f2f2"/><stop offset="1" stop-color="#e2e2e2"/></linearGradient></defs>
<path fill-rule="evenodd" d="M1389 293 A54.7 24 0 1 0 1498.4 293 A54.7 24 0 1 0 1389 293Z M1407 292 A39.8 16 0 1 0 1486.6 292 A39.8 16 0 1 0 1407 292Z" fill="#f1f1f1" stroke="#d6d6d6" stroke-width="0.8"/>
<ellipse cx="1450" cy="298" rx="26" ry="9" fill="url(#sh)"/>
<polygon points="1423.5,246 1459,242.3 1471.5,254.3 1432.4,258.4" fill="#f0f0f0" stroke="#a9a9a9" stroke-width="0.8"/>
<polygon points="1432.4,258.4 1471.5,254.3 1470.5,288 1433.4,296.5" fill="url(#ff)" stroke="#a9a9a9" stroke-width="0.8"/>
<polygon points="1423.5,246 1432.4,258.4 1433.4,296.5 1424,285" fill="#dedede" stroke="#a9a9a9" stroke-width="0.8"/>
<text x="1452" y="281.5" font-family="Liberation Sans" font-weight="bold" font-size="9.6" fill="#858585" text-anchor="middle" transform="rotate(-7 1452 277)" textLength="27">FRONT</text>
<text x="1448" y="251" font-family="Liberation Sans" font-weight="bold" font-size="5" fill="#999" text-anchor="middle" transform="rotate(186 1448 249.5)">TOP</text>
<text x="1394" y="297" font-family="Liberation Sans" font-weight="bold" font-size="8" fill="#c0c0c0" transform="rotate(25 1394 297)">W</text>
<text x="1483" y="281" font-family="Liberation Sans" font-weight="bold" font-size="7" fill="#c0c0c0" transform="rotate(-25 1483 281)">E</text>
<text x="1455" y="318" font-family="Liberation Sans" font-weight="bold" font-size="7.5" fill="#c0c0c0">S</text>
</svg>
<!-- nav bar -->
<div class="a" style="left:1490px;top:334px;width:28px;height:92px;background:#f7f7f7;border:1px solid #b9b9b9;border-radius:4px"></div>
<div class="a" style="left:1493px;top:348px;width:22px;height:31px;background:#cde2f4"></div>
<svg style="left:1490px;top:334px" width="28" height="92" viewBox="0 0 28 92"><circle cx="22" cy="4.5" r="3" fill="none" stroke="#999" stroke-width="0.9"/><path d="M20.5 3 L23.5 6 M23.5 3 L20.5 6" stroke="#999" stroke-width="0.8"/><circle cx="14" cy="24" r="8.5" fill="#eef4fa" stroke="#6b7a88" stroke-width="1.2"/><circle cx="14" cy="22" r="4.5" fill="none" stroke="#6b7a88" stroke-width="1"/><path d="M12 40 L16 40 L14 42Z" fill="#777"/><rect x="9" y="54" width="8" height="8" fill="#8bc48a"/><circle cx="17" cy="65" r="3" fill="none" stroke="#555" stroke-width="1"/><path d="M19 67 L21 69" stroke="#555" stroke-width="1.2"/><path d="M12 75 L16 75 L14 77Z" fill="#777"/><circle cx="22" cy="87" r="3" fill="none" stroke="#999" stroke-width="0.9"/><path d="M20.5 87 L23.5 87" stroke="#999" stroke-width="0.8"/></svg>
<!-- yellow counter -->
<div class="a" style="left:1480px;top:197px;width:37px;height:21.5px;background:#05050a;border-radius:1.5px"></div>
<svg style="left:1480px;top:197px" width="37" height="22" viewBox="1480 197 37 22"><g fill="#ffff00"><rect x="1480.7" y="198" width="3.3" height="19.6"/><path d="M1488.8 198 L1500.2 198 L1500.2 201.8 L1492 201.8 L1492 206.2 L1500.2 206.2 L1500.2 217.6 L1488.8 217.6 L1488.8 213.9 L1496.7 213.9 L1496.7 209.9 L1488.8 209.9Z"/><rect x="1513" y="198" width="3.2" height="19.6"/></g></svg>
<!-- view border lines -->
<div class="a" style="left:0;top:788px;width:1536px;height:1px;background:#c6c6c6"></div>
<!-- status bar -->
<div class="t" style="left:2px;top:799px;font-size:11.7px;color:#222">Press ESC, F6 or Shift+W to exit, or right-click to display context menu.</div>
<div class="a" style="left:574px;top:794px;width:203px;height:18px;background:#fff"></div><svg style="left:550px;top:805px" width="20" height="8" viewBox="0 0 20 8"><rect x="1" y="0" width="6" height="7" fill="#2a6ac4"/><rect x="12" y="0" width="2" height="7" fill="#2a6ac4"/></svg>
<svg style="left:764px;top:800px" width="10" height="6" viewBox="0 0 10 6"><path d="M1 1 L5 5 L9 1" fill="none" stroke="#999" stroke-width="1"/></svg>
<svg style="left:784px;top:796px" width="15" height="16" viewBox="0 0 15 16"><path d="M4 1 L14 1 L14 5 L8 8 L8 12 L4 15 L4 8 L1 5Z" fill="#a0a0a0"/></svg>
<div class="t" style="left:803.5px;top:798px;font-size:11.5px;color:#111">:0</div>
<svg style="left:832px;top:797px" width="16" height="15" viewBox="0 0 16 15"><rect x="1" y="1" width="14" height="13" fill="#fff" stroke="#333" stroke-width="1.3"/><rect x="1" y="1" width="14" height="3" fill="#333"/><path d="M3 7 L5 7 M7 7 L13 7 M3 10 L5 10 M7 10 L13 10" stroke="#333" stroke-width="1.3"/></svg>
<svg style="left:856px;top:797px" width="16" height="15" viewBox="0 0 16 15"><rect x="1" y="1" width="14" height="13" fill="#9a9a9a"/><path d="M3 9 L10 9 M8 6 L11 9 L8 12" stroke="#ddd" stroke-width="1.2" fill="none"/></svg>
<div class="a" style="left:879px;top:794px;width:203px;height:18px;background:#fff"></div>
<div class="t" style="left:880.5px;top:797px;font-size:12.5px;color:#8a8a8a">Main Model</div>
<svg style="left:1069px;top:800px" width="10" height="6" viewBox="0 0 10 6"><path d="M1 1 L5 5 L9 1" fill="none" stroke="#999" stroke-width="1"/></svg>
<svg style="left:1298px;top:794px" width="180" height="20" viewBox="1298 794 180 20"><ellipse cx="1309" cy="802" rx="4.5" ry="3" fill="none" stroke="#e8b020" stroke-width="2"/><ellipse cx="1316.5" cy="802" rx="4.5" ry="3" fill="none" stroke="#e8b020" stroke-width="2"/><path d="M1312 802 L1312 811 L1314.2 809 L1316 812.5 L1317.3 811.8 L1315.6 808.5 L1318.5 808.5Z" fill="#f4f4f4" stroke="#444" stroke-width="0.8" stroke-linejoin="round"/><path d="M1330 807 L1338 800 L1338 807Z M1330 810 L1340 810 L1338 806Z" fill="#cfe3f5" stroke="#2a7ad0" stroke-width="1"/><path d="M1339.5 796.5 L1345 802 M1345 796.5 L1339.5 802" stroke="#d8261c" stroke-width="1.8"/><path d="M1339 802 L1339 811 L1341.2 809 L1343 812.5 L1344.3 811.8 L1342.6 808.5 L1345.5 808.5Z" fill="#f4f4f4" stroke="#444" stroke-width="0.8" stroke-linejoin="round"/><rect x="1354" y="797" width="9" height="8" fill="#f08a30" stroke="#c05a10" stroke-width="0.8"/><path d="M1355 800 L1362 800 M1355 803 L1362 803" stroke="#ffd080" stroke-width="1"/><path d="M1358.5 805 L1358.5 812" stroke="#555" stroke-width="1"/><path d="M1364 801 L1364 810 L1366.2 808 L1368 811.5 L1369.3 810.8 L1367.6 807.5 L1370.5 807.5Z" fill="#f4f4f4" stroke="#444" stroke-width="0.8" stroke-linejoin="round"/><path d="M1379 800 L1386 797 L1386 810 L1379 812Z" fill="#a8d0f0" stroke="#2a7ad0" stroke-width="1"/><path d="M1387.5 796.5 L1393 802 M1393 796.5 L1387.5 802" stroke="#d8261c" stroke-width="1.8"/><path d="M1387 802 L1387 811 L1389.2 809 L1391 812.5 L1392.3 811.8 L1390.6 808.5 L1393.5 808.5Z" fill="#f4f4f4" stroke="#444" stroke-width="0.8" stroke-linejoin="round"/><path d="M1402 800 L1412 800 M1406.5 796 L1406.5 805" stroke="#222" stroke-width="1.3"/><path d="M1410 800 L1410 809 L1412.2 807 L1414 810.5 L1415.3 809.8 L1413.6 806.5 L1416.5 806.5Z" fill="#f4f4f4" stroke="#444" stroke-width="0.8" stroke-linejoin="round"/><circle cx="1433.5" cy="803.5" r="5.5" fill="none" stroke="#c4c4c4" stroke-width="2.6" stroke-dasharray="1.8 1.6"/><path d="M1448 797 L1464 797 L1458 805 L1458 811 L1454.5 812 L1454.5 805Z" fill="#c8d4dc" stroke="#666" stroke-width="1"/></svg>
<div class="t" style="left:1465px;top:797.5px;font-size:12px;color:#1a1a1a">:0</div>
<svg style="left:1524px;top:780px" width="10" height="9" viewBox="0 0 10 9"><g fill="#aaa"><rect x="7" y="1" width="2" height="2"/><rect x="4" y="4" width="2" height="2"/><rect x="7" y="4" width="2" height="2"/><rect x="1" y="7" width="2" height="2"/><rect x="4" y="7" width="2" height="2"/><rect x="7" y="7" width="2" height="2"/></g></svg>

<div class="a" style="left:0;top:146px;width:8px;height:644px;background:#e4e4e4"></div>
<div class="a" style="left:6px;top:146px;width:1px;height:644px;background:#a8a8a8"></div>
<div class="a" style="left:0;top:30px;width:8px;height:19px;background:#3b78c0"></div>
<div class="a" style="left:3px;top:2px;width:6px;height:20px;background:#2d6ec8;border-radius:4px 0 0 0"></div>
<div class="a" style="left:0;top:454px;width:8px;height:36px;background:#d6d6d6"></div>
<div class="a" style="left:0;top:746px;width:8px;height:44px;background:#d0d0d0"></div>
<!-- ===== TASKBAR ===== -->
<div class="a" style="left:0;top:816px;width:1536px;height:48px;background:linear-gradient(90deg,#e9d6de 0px,#ecd7e0 600px,#f3d9e3 800px,#f5d8e3 1536px)"></div>


<!-- taskbar content -->
<div class="a" style="left:0;top:815px;width:1536px;height:1px;background:#d8c8ce"></div>
<svg style="left:0;top:816px" width="1536" height="48" viewBox="0 816 1536 48">
<defs>
<linearGradient id="wx" x1="0" y1="0" x2="1" y2="1"><stop offset="0" stop-color="#f0b838"/><stop offset="1" stop-color="#e86a10"/></linearGradient>
<linearGradient id="win" x1="0" y1="0" x2="1" y2="1"><stop offset="0" stop-color="#3cb4ec"/><stop offset="1" stop-color="#1070d8"/></linearGradient>
<linearGradient id="edge" x1="0" y1="0" x2="1" y2="1"><stop offset="0" stop-color="#36c0e0"/><stop offset="0.6" stop-color="#1a70c8"/><stop offset="1" stop-color="#0f4f9a"/></linearGradient>
</defs>
<circle cx="33" cy="840" r="10" fill="url(#wx)"/>
<!-- windows -->
<g fill="url(#win)"><rect x="493" y="829" width="11" height="11"/><rect x="505" y="829" width="11" height="11"/><rect x="493" y="841" width="11" height="11"/><rect x="505" y="841" width="11" height="11"/></g>
<!-- search -->
<circle cx="550" cy="838" r="7.5" fill="none" stroke="#1a1a1a" stroke-width="2.2"/><path d="M544.5 843.5 L539.5 849" stroke="#1a1a1a" stroke-width="2.6" stroke-linecap="round"/>
<!-- task view -->
<rect x="581" y="835" width="18" height="16" rx="1" fill="#262626"/><rect x="587" y="829" width="17.5" height="15" rx="1" fill="#dcdcdc" opacity="0.92"/>
<!-- chat -->
<circle cx="637" cy="839.5" r="11" fill="#6a5fd3"/><path d="M628 848 L626 852 L632 849Z" fill="#6a5fd3"/><rect x="630.5" y="835" width="10" height="9" rx="1.5" fill="#f4f4f8"/><path d="M641 838 L645 835.5 L645 843.5 L641 841Z" fill="#f4f4f8"/>
<!-- explorer -->
<path d="M669 832 L669 830 Q669 829.5 670 829.5 L677 829.5 L679 832Z" fill="#e8a020"/><rect x="669" y="832" width="24" height="18.5" rx="1" fill="#f7c845"/><rect x="675" y="845" width="12" height="4" rx="1" fill="#1e78d0"/>
<rect x="678" y="856" width="5" height="2.5" rx="1.2" fill="#777"/>
<!-- edge -->
<circle cx="725" cy="840" r="12" fill="#1a7fd6"/><path d="M713.2 838 A12 12 0 0 1 731 829.6 L729 838 Q722 832.5 713.2 838 Z" fill="#3ac2d6"/><path d="M731 829.6 A12 12 0 0 1 736.8 843 L729.5 843.5 L728.5 838 Z" fill="#56d06c"/><path d="M729 843.3 L738 843 L738 846.3 L729 846.5 Z" fill="#f0d9e2"/><path d="M719 842 Q718.5 852 727 852 Q733 851.5 735.5 846.5 L729 846.5 Q723 847.5 721.5 841.5 Z" fill="#1c58a0"/><circle cx="725.8" cy="840.8" r="3.4" fill="#f0d9e2"/>
<!-- store -->
<path d="M762 832 Q762 826 769 826 Q776 826 776 832" fill="none" stroke="#3c9fe0" stroke-width="1.5"/><rect x="757" y="831" width="23.5" height="21" rx="3" fill="#1b4e96"/><rect x="764" y="836" width="4" height="4" fill="#f25022"/><rect x="769" y="836" width="4" height="4" fill="#7fba00"/><rect x="764" y="841" width="4" height="4" fill="#00a4ef"/><rect x="769" y="841" width="4" height="4" fill="#ffb900"/>
<!-- L -->
<rect x="801" y="828" width="24" height="24" fill="#28a6df"/><path d="M808 832 L813 832 L813 846 L820 846 L820 850 L808 850Z" fill="#fff"/><path d="M806 850 L813 836 L813 850Z" fill="#1d3f8a" opacity="0.6"/>
<!-- mcafee -->
<path d="M846 831 L851 828 L856 832 L861 828 L867 831 L867 845 L856.5 852 L846 845Z" fill="#c8302a"/><path d="M850 835 L856.5 839 L863 835 L863 843 L856.5 847 L850 843Z" fill="#f0d9e2"/><path d="M850 835 L850 843 L856.5 847 L856.5 839Z" fill="#f0d9e2"/>
<!-- ADA -->
<rect x="890" y="828" width="21.5" height="24" rx="1.5" fill="#f2f2f2" stroke="#999" stroke-width="0.5"/><path d="M894 842 Q898 834 907 834 L907 842 L905 842 L905 837 Q900 837 897 842Z" fill="#1c1c1c"/><rect x="890" y="844" width="21.5" height="8" fill="#2a2a2a"/><text x="901" y="850.5" font-family="Liberation Sans" font-weight="bold" font-size="5.5" fill="#fff" text-anchor="middle">ADA</text>
<rect x="898" y="856" width="5" height="2.5" rx="1.2" fill="#777"/>
<!-- revit highlight -->
<rect x="926" y="821" width="38" height="38" rx="4" fill="#f7e8ee"/>
<rect x="934" y="828" width="22" height="24" rx="1" fill="#2d74e0"/><rect x="934" y="843" width="22" height="9" fill="#17458f"/><text x="945" y="840" font-family="Liberation Sans" font-weight="bold" font-size="12" fill="#fff" text-anchor="middle">R</text><text x="945" y="850" font-family="Liberation Sans" font-weight="bold" font-size="5" fill="#dde" text-anchor="middle">RVT</text>
<rect x="937" y="856.5" width="15.5" height="3" rx="1.5" fill="#1a6fd8"/>
<!-- chart -->
<rect x="977" y="831" width="24" height="18" fill="#e8f2fa" stroke="#a6c6e0" stroke-width="0.8"/><path d="M978 848 L980 845 L983 838 L985 843 L988 846 L991 836 L993 844 L996 846 L999 841 L1000 848Z" fill="#7ab4e6" stroke="#3b8ed6" stroke-width="0.7"/>
<rect x="987" y="856" width="5" height="2.5" rx="1.2" fill="#777"/>
<!-- chrome -->
<circle cx="1033" cy="840" r="12" fill="#db4437"/><path d="M1033 840 L1022.6 846 A12 12 0 0 0 1039 850.4Z" fill="#0f9d58"/><path d="M1033 840 L1039 850.4 A12 12 0 0 0 1043.4 834 L1033 834Z" fill="#f4b400"/><circle cx="1033" cy="840" r="5.5" fill="#fff"/><circle cx="1033" cy="840" r="4.2" fill="#4285f4"/>
<circle cx="1041.5" cy="831" r="8" fill="#8a7a70"/><circle cx="1041.5" cy="829" r="4" fill="#5a4a40"/>
<rect x="1030" y="856" width="5" height="2.5" rx="1.2" fill="#777"/>
<!-- tray -->
<path d="M1282 843 L1288 836.5 L1294.5 843" fill="none" stroke="#222" stroke-width="1.4"/>
<rect x="1305.5" y="833" width="13" height="13" fill="#9a8b92"/><rect x="1305.5" y="845" width="13" height="1.5" fill="#4aa8e8"/>
<path d="M1330 845 Q1327 845 1328 841 Q1329 838 1332 839 Q1334 834 1339 835 Q1343 836 1343 840 Q1346 840 1345 843 Q1345 845 1342 845Z" fill="#b8b8b8" stroke="#222" stroke-width="1.2"/>
<path d="M1356 838 Q1364 831 1372 838" fill="none" stroke="#222" stroke-width="1.4"/><path d="M1358.5 840.5 Q1364 835.5 1369.5 840.5" fill="none" stroke="#222" stroke-width="1.4"/><path d="M1361 843 Q1364 840.5 1367 843" fill="none" stroke="#222" stroke-width="1.4"/><circle cx="1364" cy="845" r="1.2" fill="#222"/>
<path d="M1380 837 L1384 837 L1388 834 L1388 847 L1384 844 L1380 844Z" fill="none" stroke="#222" stroke-width="1.2"/><path d="M1390 837 Q1392 840.5 1390 844" fill="none" stroke="#222" stroke-width="1.1"/><path d="M1393 835 Q1396 840.5 1393 846" fill="none" stroke="#999" stroke-width="1"/>
<rect x="1408" y="836" width="10.5" height="9" fill="#222"/><rect x="1418.5" y="838.5" width="1.5" height="4" fill="#222"/><path d="M1405 833 L1405 838 M1403 835 L1407 835 M1405 838 L1408 840" stroke="#222" stroke-width="1.3"/>
<circle cx="1508.7" cy="840" r="8" fill="#1a73d0"/><text x="1508.7" y="844.5" font-family="Liberation Sans" font-size="11" fill="#fff" text-anchor="middle">7</text>
</svg>
<div class="t" style="left:52px;top:828.5px;font-size:11.5px;color:#222">69°F</div>
<div class="t" style="left:52px;top:843.5px;font-size:11.5px;color:#666">Sunny</div>
<div class="t" style="right:42.5px;top:826px;font-size:11.3px;letter-spacing:0.2px;color:#222">7:16 PM</div>
<div class="t" style="right:42.5px;top:841.5px;font-size:11.8px;color:#222">11/22/2022</div>

<!-- ===== TASK MANAGER ===== -->
<div class="a" id="tm" style="left:8px;top:1px;width:666px;height:806px;background:#fff;border-radius:8px;box-shadow:0 6px 22px rgba(0,0,0,0.30), 0 0 3px rgba(0,0,0,0.25)"></div>

<!-- title bar -->
<svg style="left:15px;top:9px" width="17" height="13" viewBox="0 0 17 13"><rect x="0.5" y="0.5" width="16" height="12" fill="#e9f3fb" stroke="#9cc3e6"/><path d="M1.5 10 L4 5 L6 9 L8.5 3.5 L11 9 L13 6 L15.5 10 L15.5 12 L1.5 12Z" fill="#bcd9f2" stroke="#3b8ed6" stroke-width="1"/></svg>
<div class="t" style="left:35px;top:9.5px;font-size:11.6px;color:#8d8d8d">Task Manager</div>
<div class="a" style="left:551px;top:15px;width:10px;height:1px;background:#9a9a9a"></div>
<div class="a" style="left:597px;top:10px;width:11px;height:10px;border:1px solid #9a9a9a;border-radius:1px"></div>
<svg style="left:644px;top:10px" width="11" height="11" viewBox="0 0 11 11"><path d="M0.5 0.5 L10.5 10.5 M10.5 0.5 L0.5 10.5" stroke="#9a9a9a" stroke-width="1"/></svg>
<div class="t" style="left:15px;top:34.5px;font-size:12px;color:#6f6f6f">File</div>
<div class="t" style="left:48px;top:34.5px;font-size:12px;color:#6f6f6f">Options</div>
<div class="t" style="left:104px;top:34.5px;font-size:12px;color:#6f6f6f">View</div>
<div class="a" style="left:8px;top:49px;width:666px;height:1px;background:#ececec"></div>
<!-- tabs -->
<div class="a" style="left:8px;top:74px;width:666px;height:1px;background:#e6e6e6"></div>
<div class="a" style="left:9px;top:54px;width:60px;height:21px;background:#f0f0f0;border:1px solid #e6e6e6;border-bottom:none"></div>
<div class="a" style="left:69px;top:53px;width:77px;height:22px;background:#fafafa;border:1px solid #e8e8e8;border-bottom:none"></div>
<div class="a" style="left:146px;top:54px;width:70px;height:21px;background:#f0f0f0;border:1px solid #e6e6e6;border-bottom:none"></div>
<div class="a" style="left:215px;top:54px;width:49px;height:21px;background:#f0f0f0;border:1px solid #e6e6e6;border-bottom:none"></div>
<div class="a" style="left:264px;top:54px;width:38px;height:21px;background:#f0f0f0;border:1px solid #e6e6e6;border-bottom:none"></div>
<div class="a" style="left:301px;top:54px;width:47px;height:21px;background:#f0f0f0;border:1px solid #e6e6e6;border-bottom:none"></div>
<div class="a" style="left:347px;top:54px;width:51px;height:21px;background:#f0f0f0;border:1px solid #e6e6e6;border-bottom:none"></div>
<div class="t" style="left:14.5px;top:60px;font-size:11.2px;color:#333">Processes</div>
<div class="t" style="left:74.5px;top:57.5px;font-size:12px;color:#222">Performance</div>
<div class="t" style="left:150.5px;top:60px;font-size:11.6px;color:#333">App history</div>
<div class="t" style="left:220px;top:60px;font-size:11.6px;color:#333">Startup</div>
<div class="t" style="left:269px;top:60px;font-size:11.6px;color:#333">Users</div>
<div class="t" style="left:306.5px;top:60px;font-size:11.6px;color:#333">Details</div>
<div class="t" style="left:352px;top:60px;font-size:11.6px;color:#333">Services</div>

<!-- left panel -->
<div class="a" style="left:218px;top:97px;width:1px;height:657px;background:#e8e8e8"></div>
<div class="a" style="left:12px;top:486px;width:206px;height:70px;background:#dadada;border-radius:2px"></div>
<div class="a" style="left:22px;top:97px;width:61px;height:41px;border:1px solid #78b4e2;background:#fff"></div>
<div class="t" style="left:93px;top:98px;font-size:15px;color:#1a1a1a">CPU</div>
<div class="t" style="left:93.5px;top:117.5px;font-size:11.6px;color:#333">14%&nbsp; 2.57 GHz</div>
<svg style="left:22px;top:97px" width="61" height="41" viewBox="22 97 61 41"><polygon points="49,137 49,133 52,133 55,131 58,132 62,131 65,132 68,131 71,131 74,129 76,131 79,128 81,131 82,132 82,137" fill="#e3eff9"/><polyline points="49,137 49,133 52,133 55,131 58,132 62,131 65,132 68,131 71,131 74,129 76,131 79,128 81,131 82,132" fill="none" stroke="#4a9bd8" stroke-width="1"/></svg>
<div class="a" style="left:22px;top:157px;width:61px;height:41px;border:1px solid #b56fcf;background:#fff"></div>
<div class="t" style="left:93px;top:158px;font-size:15px;letter-spacing:0.5px;color:#1a1a1a">Memory</div>
<div class="t" style="left:93.5px;top:177.5px;font-size:11.6px;color:#333">8.1/13.9 GB (58%)</div>
<div class="a" style="left:49px;top:174px;width:34px;height:24px;background:#f0f0f0;border:1px solid #b56fcf"></div>
<div class="a" style="left:22px;top:217px;width:61px;height:50px;border:1px solid #8cc866;background:#fff"></div>
<div class="t" style="left:93px;top:218px;font-size:15px;color:#1a1a1a">Disk 0 (D:)</div>
<div class="t" style="left:93.5px;top:237.5px;font-size:11.6px;color:#333">SSD</div>
<div class="t" style="left:93.5px;top:254.0px;font-size:11.6px;color:#333">0%</div>
<div class="a" style="left:22px;top:287px;width:61px;height:50px;border:1px solid #8cc866;background:#fff"></div>
<div class="t" style="left:93px;top:288px;font-size:15px;color:#1a1a1a">Disk 1 (C:)</div>
<div class="t" style="left:93.5px;top:307.5px;font-size:11.6px;color:#333">SSD</div>
<div class="t" style="left:93.5px;top:324.0px;font-size:11.6px;color:#333">2%</div>
<svg style="left:22px;top:287px" width="61" height="50" viewBox="22 287 61 50"><polyline points="52,336 55,334 58,335 62,334 66,335 70,334 73,333 75,334 78,333 81,334" fill="none" stroke="#8cc866" stroke-width="1"/></svg>
<div class="a" style="left:22px;top:357px;width:61px;height:50px;border:1px solid #8cc866;background:#fff"></div>
<div class="t" style="left:93px;top:358px;font-size:15px;color:#1a1a1a">Disk 2 (E:)</div>
<div class="t" style="left:93.5px;top:377.5px;font-size:11.6px;color:#333">Removable</div>
<div class="t" style="left:93.5px;top:394.0px;font-size:11.6px;color:#333">0%</div>
<div class="a" style="left:22px;top:426px;width:61px;height:50px;border:1px solid #c98a4a;background:#fff"></div>
<div class="t" style="left:93px;top:427px;font-size:15px;color:#1a1a1a">Wi-Fi</div>
<div class="t" style="left:93.5px;top:446.5px;font-size:11.6px;color:#333">Wi-Fi</div>
<div class="t" style="left:93.5px;top:464.0px;font-size:11.6px;color:#333"><span style="color:#8a8a8a">S:</span> 0 <span style="color:#8a8a8a">R:</span> 0 Kbps</div>
<svg style="left:22px;top:426px" width="61" height="50" viewBox="22 426 61 50"><line x1="23" y1="431" x2="82" y2="431" stroke="#c98a4a" stroke-width="1"/><polyline points="51,476 53,466 54,460 55,466 57,476 70,476 71,472 73,476 79,476 80,473 82,476" fill="#f5e6d6" stroke="#c98a4a" stroke-width="1"/></svg>
<div class="a" style="left:22px;top:496px;width:61px;height:50px;border:1px solid #4a9bd8;background:#fff"></div>
<div class="t" style="left:93px;top:497px;font-size:15px;color:#1a1a1a">GPU 0</div>
<div class="t" style="left:93.5px;top:516.5px;font-size:11.6px;color:#333">NVIDIA GeForce RTX...</div>
<div class="t" style="left:93.5px;top:534.0px;font-size:11.6px;color:#333">19%&nbsp; (49 °C)</div>
<svg style="left:22px;top:496px" width="61" height="50" viewBox="22 496 61 50"><polygon points="49.5,545 51,544 53,497 55,536 58,535.5 61,536 62,497 63.6,536 66,535.5 69,536 70.5,497 72,536 74,535 75,497 77.7,544 79,538 81.3,536 82,536 82,545" fill="#e3eff9"/><polyline points="49.5,545 51,544 53,497 55,536 58,535.5 61,536 62,497 63.6,536 66,535.5 69,536 70.5,497 72,536 74,535 75,497 77.7,544 79,538 81.3,536 82,536" fill="none" stroke="#3f8fd2" stroke-width="1"/></svg>
<div class="a" style="left:22px;top:565px;width:61px;height:50px;border:1px solid #4a9bd8;background:#fff"></div>
<div class="t" style="left:93px;top:566px;font-size:15px;color:#1a1a1a">GPU 1</div>
<div class="t" style="left:93.5px;top:585.5px;font-size:11.6px;color:#333">AMD Radeon(TM) Gr...</div>
<div class="t" style="left:93.5px;top:604.0px;font-size:11.6px;color:#333">13%&nbsp; (53 °C)</div>
<svg style="left:22px;top:565px" width="61" height="50" viewBox="22 565 61 50"><polygon points="49,614 51,612.5 53,612 54,608 55,609 57,608 59,607 61,609 63,606 64,605.5 66,608 68,609 70,608 72,608 73,607 74.5,601.5 75.5,609 77,610 79,609 80,605 81,607 82,606 82,614 49,614" fill="#e3eff9"/><polyline points="49,614 51,612.5 53,612 54,608 55,609 57,608 59,607 61,609 63,606 64,605.5 66,608 68,609 70,608 72,608 73,607 74.5,601.5 75.5,609 77,610 79,609 80,605 81,607 82,606" fill="none" stroke="#3f8fd2" stroke-width="1"/></svg>


<!-- right panel -->
<div class="t" style="left:243.5px;top:100px;font-size:25.2px;color:#111">GPU</div>
<div class="t" style="left:362.5px;top:108.5px;font-size:15px;color:#222">NVIDIA GeForce RTX 3050 Ti Laptop GPU</div>
<svg style="left:249px;top:142px" width="8" height="6" viewBox="0 0 8 6"><path d="M0.5 0.8 L4 4.5 L7.5 0.8" fill="none" stroke="#666" stroke-width="1"/></svg>
<div class="t" style="left:260px;top:138.5px;font-size:13px;color:#222">3D</div>
<div class="t" style="right:1092px;top:140.5px;font-size:9.5px;color:#8a8a8a">19%</div>
<svg style="left:250px;top:160px" width="193" height="99" viewBox="0 0 193 99"><g stroke="#dcebf7" stroke-width="1"><line x1="10.5" y1="0" x2="10.5" y2="99" /><line x1="42.9" y1="0" x2="42.9" y2="99" /><line x1="75.3" y1="0" x2="75.3" y2="99" /><line x1="107.69999999999999" y1="0" x2="107.69999999999999" y2="99" /><line x1="140.1" y1="0" x2="140.1" y2="99" /><line x1="172.5" y1="0" x2="172.5" y2="99" /><line x1="0" y1="10.5" x2="193" y2="10.5" /><line x1="0" y1="20.5" x2="193" y2="20.5" /><line x1="0" y1="29.5" x2="193" y2="29.5" /><line x1="0" y1="39.5" x2="193" y2="39.5" /><line x1="0" y1="49.5" x2="193" y2="49.5" /><line x1="0" y1="59.5" x2="193" y2="59.5" /><line x1="0" y1="69.5" x2="193" y2="69.5" /><line x1="0" y1="78.5" x2="193" y2="78.5" /><line x1="0" y1="88.5" x2="193" y2="88.5" /><line x1="0" y1="98.5" x2="193" y2="98.5" /></g><polygon points="0,97.5 85,97.5 90,96 100,96.5 107,80 115,81 122,79.5 130,81 140,81 150,80.5 160,81 168,82 173,95 178,96 182,92 188,80 192,80 192,99 0,99" fill="#eaf3fb"/><polyline points="0,97.5 85,97.5 90,96 100,96.5 107,80 115,81 122,79.5 130,81 140,81 150,80.5 160,81 168,82 173,95 178,96 182,92 188,80 192,80" fill="none" stroke="#3d8fd1" stroke-width="1.1"/><rect x="0.5" y="0.5" width="192" height="98" fill="none" stroke="#4b96d3" stroke-width="1"/></svg>
<svg style="left:451px;top:142px" width="8" height="6" viewBox="0 0 8 6"><path d="M0.5 0.8 L4 4.5 L7.5 0.8" fill="none" stroke="#666" stroke-width="1"/></svg>
<div class="t" style="left:462px;top:138.5px;font-size:13px;color:#222">Copy</div>
<div class="t" style="right:889px;top:140.5px;font-size:9.5px;color:#8a8a8a">8%</div>
<svg style="left:452px;top:160px" width="193" height="99" viewBox="0 0 193 99"><g stroke="#dcebf7" stroke-width="1"><line x1="10.5" y1="0" x2="10.5" y2="99" /><line x1="42.9" y1="0" x2="42.9" y2="99" /><line x1="75.3" y1="0" x2="75.3" y2="99" /><line x1="107.69999999999999" y1="0" x2="107.69999999999999" y2="99" /><line x1="140.1" y1="0" x2="140.1" y2="99" /><line x1="172.5" y1="0" x2="172.5" y2="99" /><line x1="0" y1="10.5" x2="193" y2="10.5" /><line x1="0" y1="20.5" x2="193" y2="20.5" /><line x1="0" y1="29.5" x2="193" y2="29.5" /><line x1="0" y1="39.5" x2="193" y2="39.5" /><line x1="0" y1="49.5" x2="193" y2="49.5" /><line x1="0" y1="59.5" x2="193" y2="59.5" /><line x1="0" y1="69.5" x2="193" y2="69.5" /><line x1="0" y1="78.5" x2="193" y2="78.5" /><line x1="0" y1="88.5" x2="193" y2="88.5" /><line x1="0" y1="98.5" x2="193" y2="98.5" /></g><polygon points="0,97.5 86,97.5 89,95 94,95 97.5,0.5 101,96 105,89 113,88 120,89 125,90 127.5,0.5 130,88 138,89 146,91 152,90 155.5,0.5 159,90 163,89 166,90 169,0.5 170.5,65 172.79999999999995,0.5 175,97 181,95 186,85 193,89 193,99 0,99" fill="#eaf3fb"/><polyline points="0,97.5 86,97.5 89,95 94,95 97.5,0.5 101,96 105,89 113,88 120,89 125,90 127.5,0.5 130,88 138,89 146,91 152,90 155.5,0.5 159,90 163,89 166,90 169,0.5 170.5,65 172.79999999999995,0.5 175,97 181,95 186,85 193,89" fill="none" stroke="#3d8fd1" stroke-width="1.1"/><rect x="0.5" y="0.5" width="192" height="98" fill="none" stroke="#4b96d3" stroke-width="1"/></svg>
<svg style="left:249px;top:271px" width="8" height="6" viewBox="0 0 8 6"><path d="M0.5 0.8 L4 4.5 L7.5 0.8" fill="none" stroke="#666" stroke-width="1"/></svg>
<div class="t" style="left:260px;top:267.5px;font-size:13px;letter-spacing:0.3px;color:#222">Video Encode</div>
<div class="t" style="right:1092px;top:269.5px;font-size:9.5px;color:#8a8a8a">0%</div>
<svg style="left:250px;top:290px" width="193" height="99" viewBox="0 0 193 99"><g stroke="#dcebf7" stroke-width="1"><line x1="10.5" y1="0" x2="10.5" y2="99" /><line x1="42.9" y1="0" x2="42.9" y2="99" /><line x1="75.3" y1="0" x2="75.3" y2="99" /><line x1="107.69999999999999" y1="0" x2="107.69999999999999" y2="99" /><line x1="140.1" y1="0" x2="140.1" y2="99" /><line x1="172.5" y1="0" x2="172.5" y2="99" /><line x1="0" y1="10.5" x2="193" y2="10.5" /><line x1="0" y1="20.5" x2="193" y2="20.5" /><line x1="0" y1="29.5" x2="193" y2="29.5" /><line x1="0" y1="39.5" x2="193" y2="39.5" /><line x1="0" y1="49.5" x2="193" y2="49.5" /><line x1="0" y1="59.5" x2="193" y2="59.5" /><line x1="0" y1="69.5" x2="193" y2="69.5" /><line x1="0" y1="78.5" x2="193" y2="78.5" /><line x1="0" y1="88.5" x2="193" y2="88.5" /><line x1="0" y1="98.5" x2="193" y2="98.5" /></g><rect x="0.5" y="0.5" width="192" height="98" fill="none" stroke="#4b96d3" stroke-width="1"/></svg>
<svg style="left:451px;top:271px" width="8" height="6" viewBox="0 0 8 6"><path d="M0.5 0.8 L4 4.5 L7.5 0.8" fill="none" stroke="#666" stroke-width="1"/></svg>
<div class="t" style="left:462px;top:267.5px;font-size:13px;letter-spacing:0.3px;color:#222">Video Decode</div>
<div class="t" style="right:889px;top:269.5px;font-size:9.5px;color:#8a8a8a">0%</div>
<svg style="left:452px;top:290px" width="193" height="99" viewBox="0 0 193 99"><g stroke="#dcebf7" stroke-width="1"><line x1="10.5" y1="0" x2="10.5" y2="99" /><line x1="42.9" y1="0" x2="42.9" y2="99" /><line x1="75.3" y1="0" x2="75.3" y2="99" /><line x1="107.69999999999999" y1="0" x2="107.69999999999999" y2="99" /><line x1="140.1" y1="0" x2="140.1" y2="99" /><line x1="172.5" y1="0" x2="172.5" y2="99" /><line x1="0" y1="10.5" x2="193" y2="10.5" /><line x1="0" y1="20.5" x2="193" y2="20.5" /><line x1="0" y1="29.5" x2="193" y2="29.5" /><line x1="0" y1="39.5" x2="193" y2="39.5" /><line x1="0" y1="49.5" x2="193" y2="49.5" /><line x1="0" y1="59.5" x2="193" y2="59.5" /><line x1="0" y1="69.5" x2="193" y2="69.5" /><line x1="0" y1="78.5" x2="193" y2="78.5" /><line x1="0" y1="88.5" x2="193" y2="88.5" /><line x1="0" y1="98.5" x2="193" y2="98.5" /></g><rect x="0.5" y="0.5" width="192" height="98" fill="none" stroke="#4b96d3" stroke-width="1"/></svg>
<div class="t" style="left:248px;top:403.5px;font-size:10.3px;color:#666">Dedicated GPU memory usage</div>
<div class="t" style="right:889px;top:403.5px;font-size:10.3px;color:#666">4.0 GB</div>
<svg style="left:248px;top:417px" width="400" height="68" viewBox="0 0 400 68"><g stroke="#dcebf7" stroke-width="1"><line x1="20.5" y1="0" x2="20.5" y2="68" /><line x1="88.1" y1="0" x2="88.1" y2="68" /><line x1="155.7" y1="0" x2="155.7" y2="68" /><line x1="223.29999999999998" y1="0" x2="223.29999999999998" y2="68" /><line x1="290.9" y1="0" x2="290.9" y2="68" /><line x1="358.5" y1="0" x2="358.5" y2="68" /><line x1="0" y1="7.5" x2="400" y2="7.5" /><line x1="0" y1="13.5" x2="400" y2="13.5" /><line x1="0" y1="20.5" x2="400" y2="20.5" /><line x1="0" y1="27.5" x2="400" y2="27.5" /><line x1="0" y1="34.5" x2="400" y2="34.5" /><line x1="0" y1="40.5" x2="400" y2="40.5" /><line x1="0" y1="47.5" x2="400" y2="47.5" /><line x1="0" y1="54.5" x2="400" y2="54.5" /><line x1="0" y1="60.5" x2="400" y2="60.5" /></g><polygon points="0,67 176,67 183,51 400,51 400,68 0,68" fill="#eaf3fb"/><polyline points="0,67 176,67 183,51 400,51" fill="none" stroke="#3d8fd1" stroke-width="1.1"/><rect x="0.5" y="0.5" width="399" height="67" fill="none" stroke="#4b96d3" stroke-width="1"/></svg>
<div class="t" style="left:248px;top:492.5px;font-size:10.3px;color:#666">Shared GPU memory usage</div>
<div class="t" style="right:889px;top:492.5px;font-size:10.3px;color:#666">6.9 GB</div>
<svg style="left:248px;top:506px" width="400" height="68" viewBox="0 0 400 68"><g stroke="#dcebf7" stroke-width="1"><line x1="20.5" y1="0" x2="20.5" y2="68" /><line x1="88.1" y1="0" x2="88.1" y2="68" /><line x1="155.7" y1="0" x2="155.7" y2="68" /><line x1="223.29999999999998" y1="0" x2="223.29999999999998" y2="68" /><line x1="290.9" y1="0" x2="290.9" y2="68" /><line x1="358.5" y1="0" x2="358.5" y2="68" /><line x1="0" y1="7.5" x2="400" y2="7.5" /><line x1="0" y1="13.5" x2="400" y2="13.5" /><line x1="0" y1="20.5" x2="400" y2="20.5" /><line x1="0" y1="27.5" x2="400" y2="27.5" /><line x1="0" y1="34.5" x2="400" y2="34.5" /><line x1="0" y1="40.5" x2="400" y2="40.5" /><line x1="0" y1="47.5" x2="400" y2="47.5" /><line x1="0" y1="54.5" x2="400" y2="54.5" /><line x1="0" y1="60.5" x2="400" y2="60.5" /></g><rect x="0.5" y="0.5" width="399" height="67" fill="none" stroke="#4b96d3" stroke-width="1"/></svg>


<!-- stats -->
<div class="t" style="left:245.5px;top:593.5px;font-size:12px;color:#777">Utilization</div>
<div class="t" style="left:245.5px;top:612px;font-size:18.6px;color:#111">19%</div>
<div class="t" style="left:245.5px;top:645.5px;font-size:12px;color:#777">GPU Memory</div>
<div class="t" style="left:245.5px;top:664.5px;font-size:18.6px;color:#111">1.0/10.9 GB</div>
<div class="t" style="left:364px;top:593.5px;font-size:12px;color:#777">Dedicated GPU memory</div>
<div class="t" style="left:364px;top:612px;font-size:18.6px;color:#111">1.0/4.0 GB</div>
<div class="t" style="left:364px;top:645.5px;font-size:12px;color:#777">Shared GPU memory</div>
<div class="t" style="left:364px;top:664.5px;font-size:18.6px;color:#111">0.1/6.9 GB</div>
<div class="t" style="left:364px;top:697px;font-size:12px;color:#777">GPU Temperature</div>
<div class="t" style="left:364px;top:716.5px;font-size:18.6px;color:#111">49 °C</div>
<div class="t" style="left:504px;top:593.5px;font-size:12px;color:#777">Driver version:</div>
<div class="t" style="left:504px;top:613px;font-size:12px;color:#777">Driver date:</div>
<div class="t" style="left:504px;top:632px;font-size:12px;color:#777">DirectX version:</div>
<div class="t" style="left:504px;top:651.5px;font-size:12px;color:#777">Physical location:</div>
<div class="t" style="left:504px;top:670.5px;font-size:12px;color:#777">Hardware reserved mem...</div>

<!-- footer -->
<svg style="left:20px;top:780px" width="12" height="7" viewBox="0 0 12 7"><path d="M0.5 6 L6 0.8 L11.5 6" fill="none" stroke="#555" stroke-width="1.1"/></svg>
<div class="t" style="left:41.5px;top:777px;font-size:11.6px;color:#222">Fewer details</div>
<div class="a" style="left:120px;top:777px;width:1px;height:13px;background:#d0d0d0"></div>
<svg style="left:128px;top:774px" width="17" height="17" viewBox="0 0 17 17"><circle cx="8.5" cy="8.5" r="7.6" fill="#f4f4f4" stroke="#777" stroke-width="1.2"/><circle cx="8.5" cy="8.5" r="5.5" fill="#fff" stroke="#bbb" stroke-width="0.6"/><path d="M6 4.5 L10.5 12" stroke="#c83a2a" stroke-width="1.8"/></svg>
<div class="t" style="left:149px;top:777px;font-size:11.8px;color:#1a70c8">Open Resource Monitor</div>


</body></html>
